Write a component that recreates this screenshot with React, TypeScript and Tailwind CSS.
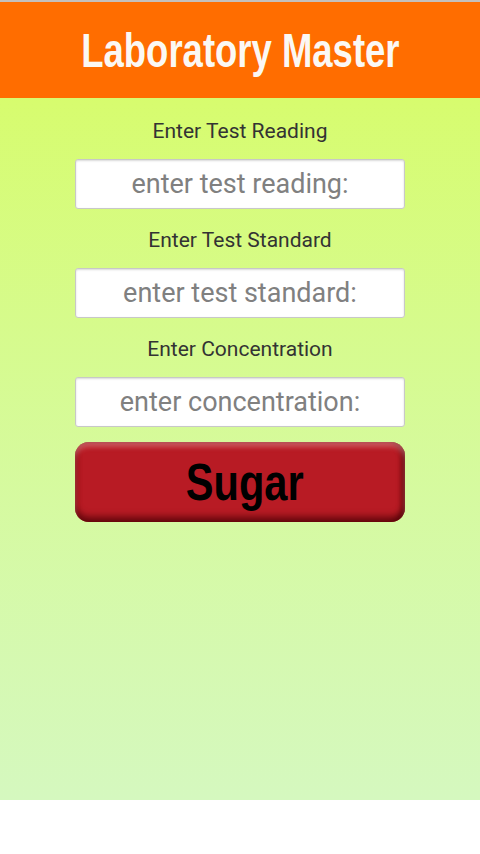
export default function App() {
  const fields = [
    { label: 'Enter Test Reading', placeholder: 'enter test reading:' },
    { label: 'Enter Test Standard', placeholder: 'enter test standard:' },
    { label: 'Enter Concentration', placeholder: 'enter concentration:' },
  ];

  return (
    <div className="w-[480px] h-[854px] bg-white flex flex-col">
      {/* Header */}
      <div className="h-[98px] bg-[#ff6d00] border-t-2 border-[#c4c0bc] flex items-center justify-center">
        <h1
          className="text-[48px] font-bold text-[#fbf8f4] leading-none pt-[2px] scale-x-[0.76] whitespace-nowrap"
          style={{ fontFamily: '"Liberation Sans", Arial, sans-serif' }}
        >
          Laboratory Master
        </h1>
      </div>

      {/* Form */}
      <div className="h-[702px] bg-gradient-to-b from-[#d7fc6e] to-[#d5f8bf] flex flex-col items-center pt-[19px]">
        {fields.map((f, i) => (
          <div key={i} className={i === 0 ? 'flex flex-col items-center' : 'flex flex-col items-center mt-[17px]'}>
            <div
              className="h-[28px] flex items-center pt-[2px] text-[21px] text-[#333333]"
              style={{ fontFamily: 'Roboto, sans-serif' }}
            >
              {f.label}
            </div>
            <input
              className="mt-[14px] w-[330px] h-[50px] bg-white border border-[#c8c8c8] rounded-[3px] shadow-[inset_0_1px_2px_rgba(0,0,0,0.15)] text-center text-[27px] text-[#333] placeholder:text-[#808080] outline-none"
              style={{ fontFamily: 'Roboto, sans-serif' }}
              placeholder={f.placeholder}
            />
          </div>
        ))}
        <button
          className="mt-[15px] w-[330px] h-[80px] rounded-[14px] bg-[#b81b24] shadow-[inset_0_5px_5px_rgba(255,210,210,0.35),inset_0_-6px_6px_rgba(70,0,5,0.6),inset_-4px_0_5px_rgba(70,0,5,0.55),inset_3px_0_4px_rgba(120,0,10,0.3)] flex items-center justify-center pl-[9px]"
        >
          <span
            className="text-[52px] font-bold text-black leading-none scale-x-[0.8]"
            style={{ fontFamily: '"Liberation Sans", Arial, sans-serif' }}
          >
            Sugar
          </span>
        </button>
      </div>
    </div>
  );
}
